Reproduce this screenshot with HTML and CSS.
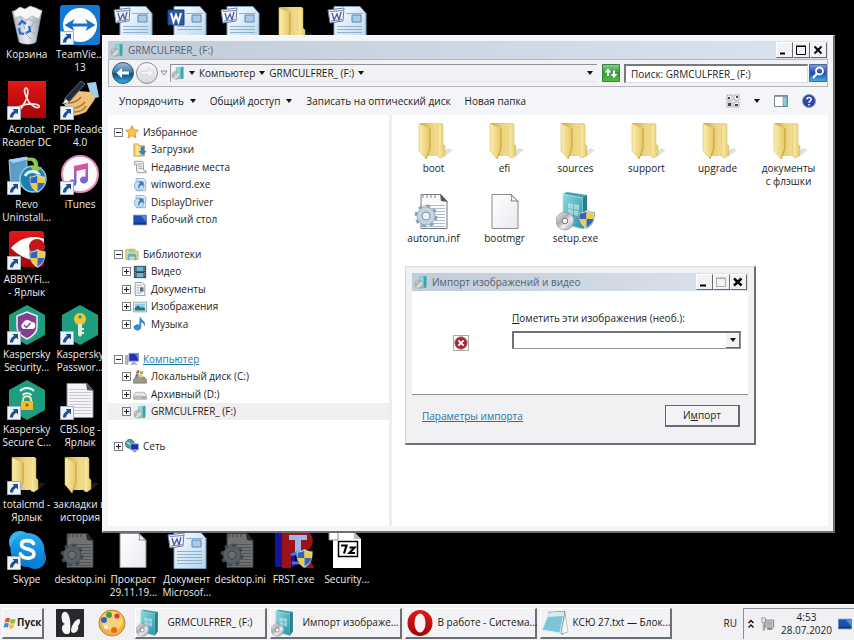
FILE: index.html
```html
<!DOCTYPE html>
<html lang="ru">
<head>
<meta charset="utf-8">
<title>GRMCULFRER_ (F:)</title>
<link rel="stylesheet" href="styles.css">
</head>
<body>
<svg class="sprite" aria-hidden="true">
  <defs>
    <linearGradient id="gFold" x1="0" x2="1"><stop offset="0" stop-color="#fbeeb0"/><stop offset="1" stop-color="#e6c763"/></linearGradient>
    <linearGradient id="gFoldIn" x1="0" x2="1"><stop offset="0" stop-color="#cfa640"/><stop offset=".5" stop-color="#ecd27c"/><stop offset="1" stop-color="#f6e39a"/></linearGradient>
    <linearGradient id="gTeal" x1="0" x2="1" y1="0" y2="1"><stop offset="0" stop-color="#8fd9df"/><stop offset="1" stop-color="#2b92a2"/></linearGradient>
    <linearGradient id="gDisc" x1="0" x2="1" y1="0" y2="1"><stop offset="0" stop-color="#f6f6f6"/><stop offset=".4" stop-color="#a9adb0"/><stop offset=".6" stop-color="#eceeef"/><stop offset="1" stop-color="#8d9296"/></linearGradient>
    <linearGradient id="gPage" x1="0" x2="1" y1="0" y2="1"><stop offset="0" stop-color="#ffffff"/><stop offset="1" stop-color="#e9eaf0"/></linearGradient>
    <linearGradient id="gWord" x1="0" x2="1" y1="0" y2="1"><stop offset="0" stop-color="#ffffff"/><stop offset="1" stop-color="#b4d3ee"/></linearGradient>
    <linearGradient id="gRed" x1="0" x2="0" y1="0" y2="1"><stop offset="0" stop-color="#e21818"/><stop offset="1" stop-color="#a50408"/></linearGradient>
    <linearGradient id="gNote" x1="0" x2="0" y1="0" y2="1"><stop offset="0" stop-color="#f0508f"/><stop offset="1" stop-color="#4f6cf0"/></linearGradient>
    <linearGradient id="gSky" x1="0" x2="0" y1="0" y2="1"><stop offset="0" stop-color="#2aa9ee"/><stop offset="1" stop-color="#0078d0"/></linearGradient>
    <linearGradient id="gBack" x1="0" x2="0" y1="0" y2="1"><stop offset="0" stop-color="#9fc0da"/><stop offset=".48" stop-color="#3a78a8"/><stop offset=".52" stop-color="#0c4a80"/><stop offset="1" stop-color="#35b5e8"/></linearGradient>
    <linearGradient id="gFwd" x1="0" x2="0" y1="0" y2="1"><stop offset="0" stop-color="#fafafa"/><stop offset="1" stop-color="#d5d7db"/></linearGradient>
    <linearGradient id="gGreen" x1="0" x2="0" y1="0" y2="1"><stop offset="0" stop-color="#8fce8f"/><stop offset=".5" stop-color="#2f9a33"/><stop offset="1" stop-color="#55c040"/></linearGradient>
    <linearGradient id="gBlue" x1="0" x2="0" y1="0" y2="1"><stop offset="0" stop-color="#7fa2dc"/><stop offset=".5" stop-color="#1f49b0"/><stop offset="1" stop-color="#3fb8ea"/></linearGradient>
    <linearGradient id="gBin" x1="0" x2="1"><stop offset="0" stop-color="#a9b3bb"/><stop offset=".5" stop-color="#e8edf1"/><stop offset="1" stop-color="#8f9ba5"/></linearGradient>
  </defs>

  <symbol id="arrow" viewBox="0 0 14 14"><path d="M.5.5h13v13H.5z" fill="#eef3f8" stroke="#9fb3c6"/><path d="M5.500 3H11v5.500L9.200 6.800C7.300 8 6.300 9.300 6 11.500H2.800C3 8.500 4.500 6.400 7.200 4.800z" fill="#1d4f92"/></symbol>
  <symbol id="shield" viewBox="0 0 16 18"><path d="M8 0c2.500 1.800 5 2.300 7.500 2.300C15.800 9 14 14.500 8 17.700 2 14.500.2 9 .5 2.300 3 2.300 5.500 1.800 8 0z" fill="#dfe6ec" stroke="#6a7d8c" stroke-width=".6"/><path d="M8 1.500v7H1.500C1.200 6.800 1.300 5 1.400 3.200 3.900 3.200 6 2.800 8 1.500z" fill="#2d66c0"/><path d="M8 1.500c2 1.300 4.100 1.700 6.600 1.700.1 1.800.2 3.600-.1 5.300H8z" fill="#f0cb3e"/><path d="M1.500 8.500H8v8.100c-3.600-2-5.800-4.800-6.500-8.100z" fill="#f0cb3e"/><path d="M8 8.500h6.500c-.7 3.300-2.900 6.100-6.500 8.100z" fill="#2d66c0"/></symbol>
  <g id="ov"><use href="#arrow" x="0" y="26" width="14" height="14"/></g>
  <g id="sh"><use href="#shield" x="22" y="19" width="17" height="19"/></g>
  <symbol id="folder" viewBox="0 0 40 40"><path d="M24 36l10-9 5 2-9 7z" fill="#777" opacity=".22"/><path d="M6 2l22 0v33H12z" fill="url(#gFoldIn)"/><path d="M24 3l5 0v20l2 2v9l-4 3-3-1z" fill="url(#gFold)" stroke="#d6b95c" stroke-width=".5"/><path d="M5 2.500L16 7.500V27l-4 11-7-8.500z" fill="url(#gFold)" stroke="#d9bd62" stroke-width=".6"/><path d="M16 7.500V27l-4 11" fill="none" stroke="#b9943a" stroke-width=".7"/></symbol>
  <symbol id="page" viewBox="0 0 40 40"><path d="M7 3.500h19l7 7v27H7z" fill="url(#gPage)" stroke="#8b8b92"/><path d="M26 3.500c1 2 1 4 0 6.500 2-.5 5 0 7 .5z" fill="#fff" stroke="#7f7f86"/></symbol>
  <symbol id="lined" viewBox="0 0 40 40"><path d="M7 3.500h20l6 7v27H7z" fill="#f5f5f7" stroke="#8b8b92"/><path d="M9 9.500h16M9 12.500h22M9 15.500h22M9 18.500h22M9 21.500h22M9 24.500h22M9 27.500h22M9 30.500h22M9 33.500h22" stroke="#c7c9d0"/><path d="M26 3l8 8-7-1z" fill="#555"/></symbol>
  <symbol id="cog" viewBox="0 0 24 24"><circle cx="12" cy="12" r="9.500" fill="none" stroke="#8ba2b5" stroke-width="4" stroke-dasharray="3.700 3.760"/><circle cx="12" cy="12" r="6.500" fill="none" stroke="#c3d3e0" stroke-width="5"/><circle cx="12" cy="12" r="9" fill="none" stroke="#8ea3b4" stroke-width=".8"/><circle cx="12" cy="12" r="4" fill="#eef2f5" stroke="#7d93a6"/></symbol>
  <symbol id="ini" viewBox="0 0 40 40"><path d="M7 3.500h20l6 7v27H7z" fill="#fafafc" stroke="#77777e"/><path d="M9 14.500h22M9 17.500h22M9 20.500h22M9 23.500h22M9 26.500h22M9 29.500h22M9 32.500h22M9 35.500h22" stroke="#aebdd0"/><path d="M9 3v4M13 3v4M17 3v4M21 3v4" stroke="#88888e"/><path d="M26 3l8 8-7-1z" fill="#555"/><use href="#cog" x="0" y="13" width="24" height="24"/></symbol>
  <symbol id="wordnew" viewBox="0 0 40 40"><path d="M7 1.500h26l6 7v30H7z" fill="url(#gWord)" stroke="#7d9dbd"/><path d="M25 10h9v7h-9z" fill="#a9cbe8" stroke="#5d88b4"/><path d="M19 8.500h17M10 21.500h25M10 24.500h25M10 27.500h25M10 30.500h25M10 33.500h25" stroke="#8db0d0"/><path d="M1 5l16-2-1 13-13 2z" fill="#f4f5fb" stroke="#6c79a8"/><path d="M5 8l2 7 3-6 2 6 2-8" fill="none" stroke="#4c5c98" stroke-width="1.300"/><path d="M3 6.500l13-1M4 16l11-1.500" stroke="#7582b0"/></symbol>
  <symbol id="wordblue" viewBox="0 0 40 40"><path d="M7 1.500h26l6 7v30H7z" fill="url(#gWord)" stroke="#7d9dbd"/><path d="M25 10h9v7h-9z" fill="#a9cbe8" stroke="#5d88b4"/><path d="M19 8.500h17M10 21.500h25M10 24.500h25" stroke="#8db0d0"/><path d="M1 5h16v15H1z" fill="#2b5aad" stroke="#173c80"/><path d="M4 8l2.500 9L9 10l2.500 7L14 8" fill="none" stroke="#fff" stroke-width="2"/></symbol>
  <symbol id="setup" viewBox="0 0 40 40"><path d="M7 3L11 1l20 3v28l-4 6L7 33z" fill="#3fa5b2"/><path d="M7 3l20 4v31L7 33z" fill="url(#gTeal)" stroke="#a7e2e6" stroke-width=".8"/><path d="M27 7l4-3v28l-4 6z" fill="#257f8e"/><path d="M12 12l5 1v5l-5-1zM18 13l5 1v5l-5-1zM12 18l5 1v5l-5-1zM18 19l5 1v5l-5-1z" fill="#c9f1f3" opacity=".6"/><circle cx="9" cy="30" r="9" fill="url(#gDisc)" stroke="#84898d" stroke-width=".6"/><circle cx="9" cy="30" r="2.800" fill="#fff" stroke="#777"/></symbol>
  <symbol id="drive" viewBox="0 0 16 16"><path d="M6 2l8-1v13l-8 1z" fill="#8ed8dc" stroke="#5fb9c0" stroke-width=".6"/><path d="M11 2l3-1v13l-3 1z" fill="#3aa3a9"/><circle cx="5.500" cy="10.500" r="4.500" fill="url(#gDisc)" stroke="#8f9599" stroke-width=".6"/><circle cx="5.500" cy="10.500" r="1.300" fill="#fff" stroke="#888" stroke-width=".5"/></symbol>
  <symbol id="bin" viewBox="0 0 40 40"><path d="M5 6l30-1-6 32c-3 3-13 3-17 0z" fill="url(#gBin)" stroke="#8e9aa4" stroke-width=".6"/><path d="M6 7l7-5 5 2 5-3 6 2 6 3-3 8-7-3-6 4-5-4-6 2z" fill="#f4f6f8" stroke="#a7b0b8" stroke-width=".7"/><path d="M13 12l4 5 5-3 7 4M10 20l5-4 3 8M26 18l-3 8 5 3M12 30l6-2 6 6" fill="none" stroke="#a3aeb8"/><path d="M12 20l3-4 4 3M12 23l1 5 4 1M19 28l4-2-1-5" fill="none" stroke="#2f65cc" stroke-width="2.200"/></symbol>
  <symbol id="tv" viewBox="0 0 40 40"><rect width="40" height="40" rx="3" fill="#1179d6"/><circle cx="20" cy="20" r="17" fill="#fff"/><path d="M4.500 20l10-6-2 4.500h15l-2-4.500 10 6-10 6 2-4.500h-15l2 4.500z" fill="#1474cc"/></symbol>
  <symbol id="acro" viewBox="0 0 40 40"><path d="M1 1h38v37H1z" fill="url(#gRed)"/><path d="M19 8c-3 0-1 8 3 14 3 4 8 7 10 5 2-3-9-4-15-2-5 1-9 4-8 6 2 2 6-3 9-9 3-5 4-14 1-14z" fill="none" stroke="#fbe7e7" stroke-width="1.700"/></symbol>
  <symbol id="pdf" viewBox="0 0 40 40"><path d="M27 3l9-1 3 15-7 2z" fill="#9ccdea"/><path d="M4 23l14-12 13 1 4 7-9 13c-7 3-14 6-19 1z" fill="#edc179"/><path d="M8 23c5 0 10-2 13-6M10 28c6 1 12-2 15-6M14 32c6 0 10-2 12-6" fill="none" stroke="#a9752f" stroke-width="1.500"/><path d="M5 18L21 1l4 3L10 21l-6 3z" fill="#222c38" stroke="#5d6873"/><path d="M2 24l4-5 3 3z" fill="#eee"/></symbol>
  <symbol id="revo" viewBox="0 0 40 40"><path d="M2 5L20 2v28L4 34z" fill="#5b9ec9" stroke="#9ac9e3"/><path d="M2 5l18-3 3 2L6 8z" fill="#a7d3ea"/><circle cx="26" cy="24" r="13" fill="#1e7fae" stroke="#8ed1e8" stroke-width="1.500"/><path d="M21 3c8-2 11 4 10 9h4l-7 7-5-8h4c0-4-2-6-6-5z" fill="#8ccb45"/><path d="M18 21c3-6 12-6 15 0" fill="none" stroke="#d7f3fa" stroke-width="3"/></symbol>
  <symbol id="itunes" viewBox="0 0 40 40"><circle cx="20" cy="19" r="18" fill="#fcfafd" stroke="#e28fc0" stroke-width="2"/><path d="M14 11l14-3v17a4 3.500 0 1 1-2.500-3.300V14l-9 2v12a4 3.500 0 1 1-2.500-3.300z" fill="url(#gNote)"/></symbol>
  <symbol id="abbyy" viewBox="0 0 40 40"><rect x="2" y="1" width="35" height="36" rx="3" fill="url(#gRed)"/><path d="M4 18C14 7 26 5 37 9v20c-12 4-24-2-33-11z" fill="#fff"/><circle cx="30" cy="17" r="8" fill="#c5161c"/></symbol>
  <symbol id="hex" viewBox="0 0 40 40"><path d="M20 0l18 10v20L20 40 2 30V10z" fill="#1f9e7f"/></symbol>
  <symbol id="ksec" viewBox="0 0 40 40"><use href="#hex"/><path d="M20 7l10 4v11c0 5-4 9-10 12-6-3-10-7-10-12V11z" fill="#84408f" stroke="#f3edf5" stroke-width="1.500"/><path d="M16 24a3.500 3.500 0 0 1 0-6 5 5 0 0 1 8.500-1 3.500 3.500 0 0 1 .5 7z" fill="#fff"/><path d="M17 20l2.500 2.500 4-4.500" fill="none" stroke="#84408f" stroke-width="1.500"/></symbol>
  <symbol id="kpass" viewBox="0 0 40 40"><use href="#hex"/><circle cx="20" cy="14" r="6" fill="#f3c62c"/><circle cx="20" cy="12" r="1.800" fill="#1f9e7f"/><path d="M18 19h4v11l-2 2-2-2z" fill="#e9e6d8"/><path d="M22 23h2v2h-2zM22 27h2v2h-2z" fill="#e9e6d8"/></symbol>
  <symbol id="kvpn" viewBox="0 0 40 40"><use href="#hex"/><path d="M13 11c4-4 10-4 14 0M15.500 15c3-2.500 6-2.500 9 0" fill="none" stroke="#e9fff8" stroke-width="1.800"/><path d="M16 22v-2c0-5 8-5 8 0v2" fill="none" stroke="#f4e4b5" stroke-width="2"/><path d="M14 21h12v9H14z" fill="#f5b92a"/><circle cx="20" cy="25" r="1.500" fill="#8c6110"/></symbol>
  <symbol id="skype" viewBox="0 0 40 40"><circle cx="13" cy="12" r="11" fill="#35b5f2"/><circle cx="28" cy="28" r="11" fill="#0a7fd6"/><circle cx="20.500" cy="20" r="17" fill="url(#gSky)"/><path d="M26.500 13.500c-2-4-12-4-12 1 0 6 12.500 3 12.500 9.500 0 5.500-11 5.500-13.500 0" fill="none" stroke="#fff" stroke-width="3.600" stroke-linecap="round"/></symbol>
  <symbol id="frst" viewBox="0 0 40 40"><path d="M1 1h20v36H1z" fill="#14149c"/><path d="M8 38V2h24c9 0 9 17 0 18l8 18H29l-6-16h-6v16z" fill="#9c1218"/><path d="M15 5h18v5h-6v15h-6V10h-6z" fill="#9ab7f0"/><path d="M17 25c5-3 10 0 12 6M18 33h9" fill="none" stroke="#4c6ff0" stroke-width="3"/></symbol>
  <symbol id="sevenz" viewBox="0 0 40 40"><path d="M6 2h21l7 7v29H6z" fill="#fff"/><path d="M27 2l7 7h-7z" fill="#bbb"/><path d="M2 1h9v9H2z" fill="#fff" stroke="#888"/><path d="M11.500 11.500h19v15h-19z" fill="#fff" stroke="#000" stroke-width="1.500"/><path d="M14 15.500h5.500L17 23.500M22.500 17.500h5l-5 5.500h5.500" fill="none" stroke="#000" stroke-width="2.200"/></symbol>

  <symbol id="flag" viewBox="0 0 16 16"><path d="M3 3c2-1.300 3.500-1.200 5-.3L7 7.500C5.500 6.700 4 6.700 2 7.700z" fill="#e5532a"/><path d="M9 3c2 1 3.500 1 5.500 0L13.300 8c-2 1-3.500 1-5.200 0z" fill="#8bbf3a"/><path d="M1.700 8.700c2-1.100 3.500-1 5-.2l-1 4.700c-1.600-.9-3-.9-5 .2z" fill="#3f86d8"/><path d="M7.800 9c1.700 1 3.300 1 5.200 0l-1.200 4.800c-2 1-3.500 1-5 0z" fill="#f6c12c"/></symbol>
  <symbol id="bfly" viewBox="0 0 28 28"><path d="M0 0h28v28H0z" fill="#26282b"/><path d="M14 23C15 14 14 5 10 3 6 2 5 7 6 11c0 2 1 3 3 4-3 1-4 4-2 8 2 3 6 3 7 0z" fill="#f4f4f4"/><path d="M15 21c1-6 5-11 8-11 2 1 1 5-1 7 1 3-1 6-4 7-2 0-3-1-3-3z" fill="#f4f4f4"/></symbol>
  <symbol id="palette" viewBox="0 0 28 28"><ellipse cx="14" cy="14" rx="13" ry="13" fill="#f0b04c" stroke="#c7822b"/><ellipse cx="14" cy="12" rx="11" ry="9.500" fill="#f9d080"/><circle cx="11" cy="6" r="3" fill="#3f9f3a"/><circle cx="6" cy="11" r="3" fill="#3264c6"/><circle cx="19" cy="7" r="2.600" fill="#df3c2a"/><circle cx="22" cy="14" r="2.600" fill="#f5e04a"/><circle cx="16" cy="21" r="3" fill="#e06c1d"/><circle cx="8" cy="18" r="2" fill="#fff"/></symbol>
  <symbol id="opera" viewBox="0 0 28 28"><ellipse cx="14" cy="14" rx="12.500" ry="13" fill="url(#gRed)"/><ellipse cx="14" cy="14" rx="5.500" ry="9.500" fill="#f6f4f6"/></symbol>
  <symbol id="notepad" viewBox="0 0 28 28"><path d="M7 3l17-1 2 20-5 4z" fill="#5f7f8a"/><path d="M8 4l15-1-4 21-18-3z" fill="#7cc4d6" stroke="#d9eff4"/><path d="M8 4l15-1-1 4-15 1z" fill="#d6ebf1"/><path d="M24 4l3 19-7 2z" fill="#f3f5f6" stroke="#a1a9ac" stroke-width=".6"/></symbol>

  <symbol id="star" viewBox="0 0 16 16"><path d="M8 .8l2.100 4.800 5.200.5-3.900 3.500 1.100 5.200L8 12.100l-4.500 2.700 1.100-5.200L.7 6.100l5.200-.5z" fill="#fbc646" stroke="#d98a28"/></symbol>
  <symbol id="dl" viewBox="0 0 16 16"><path d="M1 1h5l1 2h6v12H1z" fill="#f0d27a" stroke="#caa54a"/><path d="M5 3v11" stroke="#fff2bf" stroke-width="2"/><path d="M9 4h4v5h2.500L11 14.500 6.500 9H9z" fill="#2b86cb"/></symbol>
  <symbol id="recent" viewBox="0 0 16 16"><path d="M2 1.500h9l1 3v7l3 1v2H5l-1-3V5H1.500z" fill="#f1f1f3" stroke="#8f9298"/><path d="M5 4.500h5M6 7h4M6 9.500h5" stroke="#8f9298"/></symbol>
  <symbol id="lnk" viewBox="0 0 16 16"><path d="M3.500.5h9l2 2v12h-11z" fill="#dbe8f5" stroke="#93aec8"/><circle cx="7" cy="9" r="5.500" fill="#c9ddf0" stroke="#87a7c7"/><path d="M6 4h6v6l-2-2c-2 1-3 2-3 5-2-3-1-5 1-7z" fill="#3a7cc0"/></symbol>
  <symbol id="desk" viewBox="0 0 16 16"><path d="M.5 2.500h15v11H.5z" fill="#1c50b8" stroke="#6a86a8"/><path d="M9 3h6v7z" fill="#4f8ce0"/><path d="M1 11h14v2H1z" fill="#18386e"/></symbol>
  <symbol id="lib" viewBox="0 0 16 16"><path d="M1 3h5l1 2h8v9H1z" fill="#efd98c" stroke="#c4aa55"/><path d="M4 2h8v4H4z" fill="#9ccf8f"/><path d="M3 15V9c0-2 10-2 10 0v6h-2v-4H5v4z" fill="#58b1cf"/></symbol>
  <symbol id="film" viewBox="0 0 16 16"><path d="M1 1h14v14H1z" fill="#2d4450"/><path d="M4 2h8v5H4zM4 9h8v5H4z" fill="#6db4d0"/><path d="M2.500 2v12M13.500 2v12" stroke="#c8d6dc" stroke-dasharray="1 1"/></symbol>
  <symbol id="docs" viewBox="0 0 16 16"><path d="M2.500.5h8l3 3v12h-11z" fill="#f4f6f8" stroke="#8a929a"/><path d="M4 3.500h6M4 6.500h3M4 9.500h3M4 12.500h6" stroke="#98a6b4"/><path d="M8 6h4v5H8z" fill="#5d6f80"/></symbol>
  <symbol id="pics" viewBox="0 0 16 16"><path d="M.5 2.500h15v11H.5z" fill="#fff" stroke="#8c9aa4"/><path d="M2 4h12v8H2z" fill="#8cd0ea"/><path d="M2 9l4-3 3 3 2-1 3 2v2H2z" fill="#2b6f74"/></symbol>
  <symbol id="music" viewBox="0 0 16 16"><path d="M8 0c1 4 7 4 5 10 0-3-2-4-4-4v6a4 3.200 0 1 1-1.500-2.600z" fill="#2f8fd0" stroke="#1c6ba8" stroke-width=".5"/></symbol>
  <symbol id="pc" viewBox="0 0 16 16"><path d="M.5 4h3v10h-3z" fill="#b5bcc3" stroke="#78828c" stroke-width=".6"/><path d="M4.500 1.500h11v9h-11z" fill="#1f33b8" stroke="#98a4b0"/><path d="M11 2h4v6z" fill="#5a7ce8"/><path d="M8 11h4v2h2v1.500H6V13h2z" fill="#a9b0b8"/></symbol>
  <symbol id="hdd" viewBox="0 0 16 16"><path d="M3 6h10l2.500 4v4H.5v-4z" fill="#e4e6e8" stroke="#8b9095" stroke-width=".7"/><path d="M1 10h14v4H1z" fill="#b9bdc1"/><path d="M11 11.500h3v1h-3z" fill="#4a5"/></symbol>
  <symbol id="sysdd" viewBox="0 0 16 16"><path d="M3 8h10l2.500 3v4H.5v-4z" fill="#9b9a80" stroke="#6b6d66" stroke-width=".7"/><use href="#flag" x="2" y="-1" width="11" height="11"/></symbol>
  <symbol id="net" viewBox="0 0 16 16"><circle cx="5.500" cy="5.500" r="5" fill="#3fa5a5" stroke="#25706f"/><path d="M2 4c3 0 2 3 5 2" fill="none" stroke="#bfe6c0" stroke-width="1.500"/><path d="M6.500 5.500h9v7h-9z" fill="#1b30b4" stroke="#9db2d0"/><path d="M9 13h4v2H9z" fill="#8895a8"/></symbol>
  <symbol id="tray" viewBox="0 0 16 16"><path d="M4.500 3.500h10v8h-10z" fill="#d6d8da" stroke="#777"/><path d="M6 5h7v5H6z" fill="#a9adb1"/><path d="M1 1h4v5H4v9H2.500V6H1z" fill="#eee" stroke="#777" stroke-width=".8"/><path d="M7 13.500h6" stroke="#777" stroke-width="2"/></symbol>
</svg>

<main class="desktop">
  <div class="icons">
    <ul class="column">
      <li class="shortcut"><svg class="big"><use href="#bin"/></svg>Корзина</li>
      <li class="shortcut"><svg class="big"><use href="#acro"/><use href="#ov"/></svg>Acrobat<br>Reader DC</li>
      <li class="shortcut"><svg class="big"><use href="#revo"/><use href="#sh"/><use href="#ov"/></svg>Revo<br>Uninstall...</li>
      <li class="shortcut"><svg class="big"><use href="#abbyy"/><use href="#sh"/><use href="#ov"/></svg>ABBYYFi...<br>- Ярлык</li>
      <li class="shortcut"><svg class="big"><use href="#ksec"/><use href="#ov"/></svg>Kaspersky<br>Security...</li>
      <li class="shortcut"><svg class="big"><use href="#kvpn"/><use href="#ov"/></svg>Kaspersky<br>Secure C...</li>
      <li class="shortcut"><svg class="big"><use href="#folder"/><use href="#ov"/></svg>totalcmd -<br>Ярлык</li>
      <li class="shortcut"><svg class="big"><use href="#skype"/><use href="#ov"/></svg>Skype</li>
    </ul>
    <ul class="column">
      <li class="shortcut"><svg class="big"><use href="#tv"/><use href="#ov"/></svg>TeamVie...<br>13</li>
      <li class="shortcut"><svg class="big"><use href="#pdf"/><use href="#ov"/></svg>PDF Reader<br>4.0</li>
      <li class="shortcut"><svg class="big"><use href="#itunes"/><use href="#ov"/></svg>iTunes</li>
      <li class="shortcut"></li>
      <li class="shortcut"><svg class="big"><use href="#kpass"/><use href="#ov"/></svg>Kaspersky<br>Passwor...</li>
      <li class="shortcut"><svg class="big"><use href="#lined"/><use href="#ov"/></svg>CBS.log -<br>Ярлык</li>
      <li class="shortcut"><svg class="big"><use href="#folder"/></svg>закладки и<br>история</li>
      <li class="shortcut"><svg class="big hidden-file"><use href="#ini"/></svg>desktop.ini</li>
    </ul>
    <ul class="column ends">
      <li class="shortcut"><svg class="big"><use href="#wordnew"/></svg></li>
      <li class="shortcut"><svg class="big"><use href="#page"/></svg>Прокраст<br>29.11.19...</li>
    </ul>
    <ul class="column ends">
      <li class="shortcut"><svg class="big"><use href="#wordblue"/></svg></li>
      <li class="shortcut"><svg class="big"><use href="#wordnew"/></svg>Документ<br>Microsof...</li>
    </ul>
    <ul class="column ends">
      <li class="shortcut"><svg class="big"><use href="#wordnew"/></svg></li>
      <li class="shortcut"><svg class="big hidden-file"><use href="#ini"/></svg>desktop.ini</li>
    </ul>
    <ul class="column ends">
      <li class="shortcut"><svg class="big"><use href="#folder"/></svg></li>
      <li class="shortcut"><svg class="big"><use href="#frst"/><use href="#sh"/></svg>FRST.exe</li>
    </ul>
    <ul class="column ends">
      <li class="shortcut"><svg class="big"><use href="#wordnew"/></svg></li>
      <li class="shortcut"><svg class="big"><use href="#sevenz"/></svg>Security...</li>
    </ul>
  </div>

  <section class="window explorer" aria-label="GRMCULFRER_ (F:)">
    <header class="titlebar">
      <svg class="small"><use href="#drive"/></svg>
      <h1 class="caption">GRMCULFRER_ (F:)</h1>
      <button class="winbtn" aria-label="Свернуть"><svg viewBox="0 0 12 12"><path d="M2 9.500h5" stroke="#000" stroke-width="2"/></svg></button>
      <button class="winbtn" aria-label="Развернуть"><svg viewBox="0 0 12 12"><path d="M1.500 2.500h9v8h-9zM1 2h10" fill="none" stroke="#000"/></svg></button>
      <button class="winbtn" aria-label="Закрыть"><svg viewBox="0 0 12 12"><path d="M2.500 2.500l7 7M9.500 2.500l-7 7" stroke="#000" stroke-width="2"/></svg></button>
    </header>
    <div class="addressrow">
      <button class="round" aria-label="Назад"><svg viewBox="0 0 22 22"><circle cx="11" cy="11" r="10.500" fill="url(#gBack)" stroke="#35536e"/><path d="M4.500 11L10 6v3.500h7v3h-7V16z" fill="#fff"/></svg></button>
      <button class="round" aria-label="Вперёд"><svg viewBox="0 0 22 22"><circle cx="11" cy="11" r="10.500" fill="url(#gFwd)" stroke="#8c8f94"/><path d="M17.500 11L12 6v3.500H5v3h7V16z" fill="#f6f6f8" stroke="#c9ccd0" stroke-width=".6"/></svg></button>
      <button class="plain" aria-label="Последние страницы"><svg class="tick" viewBox="0 0 8 6"><path d="M1 1h6L4 5z" fill="#fff" stroke="#888"/></svg></button>
      <nav class="address">
        <svg class="small"><use href="#drive"/></svg>
        <i class="tri"></i><a class="crumb" href="#">Компьютер</a><i class="tri"></i><a class="crumb" href="#">GRMCULFRER_ (F:)</a><i class="tri"></i>
        <button class="plain last" aria-label="Предыдущие расположения"><i class="tri"></i></button>
      </nav>
      <button class="plain" aria-label="Обновить"><svg class="glyph" viewBox="0 0 18 18"><path d="M.5.5h17v17H.5z" fill="url(#gGreen)" stroke="#3e7f45"/><path d="M2.500 8.500L6 4.500 9.500 8.500H7V12H5V8.500zM15.500 10L12 14l-3.500-4H11V6.500h2V10z" fill="#fff"/></svg></button>
      <div class="search">
        <input class="searchbox" type="text" aria-label="Поиск" value="Поиск: GRMCULFRER_ (F:)">
        <button class="plain" aria-label="Найти"><svg class="glyph" viewBox="0 0 18 18"><path d="M.5.5h17v17H.5z" fill="url(#gBlue)" stroke="#48689a"/><circle cx="10.500" cy="7" r="3.500" fill="none" stroke="#fff" stroke-width="1.800"/><path d="M8 9.500L4 14" stroke="#fff" stroke-width="2.200"/></svg></button>
      </div>
    </div>
    <div class="toolbar">
      <button class="tool">Упорядочить<i class="tri"></i></button>
      <button class="tool">Общий доступ<i class="tri"></i></button>
      <button class="tool">Записать на оптический диск</button>
      <button class="tool">Новая папка</button>
      <span class="spacer"></span>
      <button class="plain" aria-label="Вид"><svg class="small" viewBox="0 0 14 14"><path d="M1 1h5v5H1zM8 1h5v5H8zM1 8h5v5H1zM8 8h5v5H8z" fill="#fff" stroke="#999" stroke-width=".8"/><path d="M2 3h2v2H2zM10 2h2v2h-2zM2 9h3v3H2zM9 10h3v2H9z" fill="#444"/></svg></button>
      <button class="plain" aria-label="Другие виды"><i class="tri"></i></button>
      <button class="plain" aria-label="Область просмотра"><svg class="small" viewBox="0 0 14 14"><path d="M.5 1.500h13v11H.5z" fill="#fff" stroke="#7d8790"/><path d="M1 2h12v1H1z" fill="#8fa3b3"/><path d="M9 3h4v9H9z" fill="#8ccbdc" stroke="#5f8fa0" stroke-width=".6"/></svg></button>
      <button class="plain" aria-label="Справка"><svg class="small" viewBox="0 0 14 14"><circle cx="7" cy="7" r="6.500" fill="#2d47a8" stroke="#8d97c0"/><path d="M4.800 5.400C5 2.600 9.400 2.900 9.200 5.400 9.100 6.900 7 6.900 7 8.800M7 10v1.600" fill="none" stroke="#fff" stroke-width="1.500"/></svg></button>
    </div>
    <div class="panes">
      <nav class="tree">
        <ul class="group">
          <li class="node"><i class="box minus"></i><svg class="small"><use href="#star"/></svg>Избранное</li>
          <li class="node leaf"><svg class="small"><use href="#dl"/></svg>Загрузки</li>
          <li class="node leaf"><svg class="small"><use href="#recent"/></svg>Недавние места</li>
          <li class="node leaf"><svg class="small"><use href="#lnk"/></svg>winword.exe</li>
          <li class="node leaf"><svg class="small"><use href="#lnk"/></svg>DisplayDriver</li>
          <li class="node leaf"><svg class="small"><use href="#desk"/></svg>Рабочий стол</li>
        </ul>
        <ul class="group">
          <li class="node"><i class="box minus"></i><svg class="small"><use href="#lib"/></svg>Библиотеки</li>
          <li class="node child"><i class="box plus"></i><svg class="small"><use href="#film"/></svg>Видео</li>
          <li class="node child"><i class="box plus"></i><svg class="small"><use href="#docs"/></svg>Документы</li>
          <li class="node child"><i class="box plus"></i><svg class="small"><use href="#pics"/></svg>Изображения</li>
          <li class="node child"><i class="box plus"></i><svg class="small"><use href="#music"/></svg>Музыка</li>
        </ul>
        <ul class="group">
          <li class="node"><i class="box minus"></i><svg class="small"><use href="#pc"/></svg><a class="link" href="#">Компьютер</a></li>
          <li class="node child"><i class="box plus"></i><svg class="small"><use href="#sysdd"/></svg>Локальный диск (C:)</li>
          <li class="node child"><i class="box plus"></i><svg class="small"><use href="#hdd"/></svg>Архивный (D:)</li>
          <li class="node child selected"><i class="box plus"></i><svg class="small"><use href="#drive"/></svg>GRMCULFRER_ (F:)</li>
        </ul>
        <ul class="group">
          <li class="node"><i class="box plus"></i><svg class="small"><use href="#net"/></svg>Сеть</li>
        </ul>
      </nav>
      <ul class="files">
        <li class="file"><svg class="big"><use href="#folder"/></svg>boot</li>
        <li class="file"><svg class="big"><use href="#folder"/></svg>efi</li>
        <li class="file"><svg class="big"><use href="#folder"/></svg>sources</li>
        <li class="file"><svg class="big"><use href="#folder"/></svg>support</li>
        <li class="file"><svg class="big"><use href="#folder"/></svg>upgrade</li>
        <li class="file"><svg class="big"><use href="#folder"/></svg>документы<br>с флэшки</li>
        <li class="file"><svg class="big"><use href="#ini"/></svg>autorun.inf</li>
        <li class="file"><svg class="big"><use href="#page"/></svg>bootmgr</li>
        <li class="file"><svg class="big"><use href="#setup"/><use href="#sh"/></svg>setup.exe</li>
      </ul>
    </div>
  </section>

  <section class="window dialog" role="dialog" aria-label="Импорт изображений и видео">
    <header class="titlebar">
      <svg class="small"><use href="#drive"/></svg>
      <h2 class="caption">Импорт изображений и видео</h2>
      <button class="winbtn" aria-label="Свернуть"><svg viewBox="0 0 12 12"><path d="M2 9.500h6" stroke="#000" stroke-width="2"/></svg></button>
      <button class="winbtn" aria-label="Развернуть" disabled><svg viewBox="0 0 12 12"><path d="M1.500 2.500h9v8h-9zM1 2h10" fill="none" stroke="#aaa"/></svg></button>
      <button class="winbtn" aria-label="Закрыть"><svg viewBox="0 0 12 12"><path d="M2 2.500l7.500 7M9.500 2.500l-7.500 7" stroke="#000" stroke-width="2.400"/></svg></button>
    </header>
    <div class="dialogbody">
      <div class="preview"><svg class="error" viewBox="0 0 18 18"><path d="M.5.5h17v17H.5z" fill="#fff" stroke="#999"/><circle cx="9" cy="9" r="7" fill="#b02032" stroke="#888"/><path d="M6 6l6 6M12 6l-6 6" stroke="#fff" stroke-width="2.200"/></svg></div>
      <div class="field">
        <label for="tag"><u>П</u>ометить эти изображения (необ.):</label>
        <div class="combo"><select id="tag"><option></option></select><i class="drop"><i class="tri"></i></i></div>
      </div>
    </div>
    <footer class="dialogfoot">
      <a class="link" href="#">Параметры импорта</a>
      <button class="primary">И<u>м</u>порт</button>
    </footer>
  </section>
</main>

<footer class="taskbar">
  <button class="start"><svg class="small"><use href="#flag"/></svg>Пуск</button>
  <div class="quick">
    <button class="plain" aria-label="Бабочка"><svg class="medium"><use href="#bfly"/></svg></button>
    <button class="plain" aria-label="Палитра"><svg class="medium"><use href="#palette"/></svg></button>
  </div>
  <div class="tasks">
    <button class="task"><svg class="medium"><use href="#setup"/></svg>GRMCULFRER_ (F:)</button>
    <button class="task"><svg class="medium"><use href="#setup"/></svg>Импорт изображе...</button>
    <button class="task"><svg class="medium"><use href="#opera"/></svg>В работе - Система...</button>
    <button class="task"><svg class="medium"><use href="#notepad"/></svg>КСЮ 27.txt — Блок...</button>
  </div>
  <span class="lang">RU</span>
  <div class="tray">
    <button class="plain" aria-label="Скрытые значки"><svg class="chev" viewBox="0 0 8 10"><path d="M1.500 4L4 1.500 6.500 4M1.500 8.500L4 6l2.500 2.500" fill="none" stroke="#111" stroke-width="1.400"/></svg></button>
    <svg class="small"><use href="#tray"/></svg>
    <time class="clock">4:53<br>28.07.2020</time>
    <svg class="small"><use href="#desk"/></svg>
  </div>
</footer>
</body>
</html>
```
FILE: styles.css
```css
* {
  box-sizing: border-box;
}

body {
  margin: 0;
  height: 100vh;
  display: flex;
  flex-direction: column;
  overflow: hidden;
  background: #000;
  color: #1c1c20;
  font-family: "Open Sans", "Noto Sans", sans-serif;
  font-size: 10px;
  line-height: 13px;
}

ul {
  list-style: none;
  margin: 0;
  padding: 0;
}

button,
input,
select {
  font: inherit;
  color: inherit;
  margin: 0;
  padding: 0;
}

svg {
  display: block;
  flex: none;
}

.sprite {
  position: absolute;
  width: 0;
  height: 0;
}

.small {
  width: 14px;
  height: 14px;
}

.medium {
  width: 28px;
  height: 28px;
}

.big {
  width: 40px;
  height: 40px;
}

.plain {
  display: flex;
  align-items: center;
  border: 0;
  background: none;
}

.tri {
  width: 0;
  height: 0;
  border: 3px solid transparent;
  border-top: 4px solid #111;
  border-bottom: 0;
}

.link {
  color: #2474a6;
}

/* Desktop */

.desktop {
  position: relative;
  flex: 1;
  min-height: 0;
}

.icons {
  display: grid;
  grid-template-columns: repeat(16, 1fr);
  height: 100%;
  padding-top: 5px;
  color: #eee;
}

.column {
  display: flex;
  flex-direction: column;
  min-width: 0;
}

.ends {
  justify-content: space-between;
}

.shortcut {
  display: flex;
  flex-direction: column;
  align-items: center;
  height: 75px;
  white-space: nowrap;
  text-align: center;
}

.shortcut .big {
  margin-bottom: 3px;
}

.hidden-file {
  opacity: 0.45;
}

/* Windows */

.window {
  position: absolute;
  display: flex;
  flex-direction: column;
  background: #f1f1f4;
  border: 1px solid #f8f9fb;
  border-right: 2px solid #6c6f73;
  border-bottom: 2px solid #6c6f73;
}

.explorer {
  top: 35px;
  right: 19px;
  bottom: 71px;
  left: 102px;
  padding: 5px;
  background: #f3f5f8;
}

.dialog {
  top: 266px;
  left: 405px;
  width: 351px;
  padding: 6px;
  border-top-color: #d6d9dd;
  border-left-color: #d6d9dd;
}

.titlebar {
  display: flex;
  align-items: center;
  height: 18px;
  padding: 0 1px 0 2px;
  background: linear-gradient(90deg, #c1ccd8, #d9e4ef);
}

.caption {
  flex: 1;
  margin: 0 0 0 4px;
  font-size: 10px;
  font-weight: 400;
  color: #53616f;
}

.winbtn {
  width: 17px;
  height: 16px;
  padding: 1px;
  background: #f3f3f5;
  border: 1px solid #fff;
  border-right-color: #66696d;
  border-bottom-color: #66696d;
}

.winbtn svg {
  width: 12px;
  height: 12px;
}

.addressrow {
  display: flex;
  align-items: center;
  height: 28px;
  padding: 0 0 0 3px;
  background: #f2f2f5;
  border: 1px solid #b4b6ba;
}

.round {
  width: 22px;
  height: 22px;
  margin-right: 2px;
  border: 0;
  background: none;
}

.tick {
  width: 8px;
  height: 6px;
}

.address {
  flex: 1;
  display: flex;
  align-items: center;
  gap: 4px;
  height: 18px;
  margin: 0 5px 0 2px;
  border: 1px solid #8f9196;
  border-right: 0;
  border-bottom-color: #e3e4e8;
}

.crumb {
  color: inherit;
  text-decoration: none;
}

.last {
  margin: 0 4px 0 auto;
}

.glyph {
  width: 18px;
  height: 18px;
}

.search {
  display: flex;
  align-items: center;
  width: 203px;
  margin-left: 4px;
}

.searchbox {
  flex: 1;
  min-width: 0;
  height: 19px;
  padding: 0 5px;
  margin-right: 1px;
  background: #fff;
  border: 1px solid #dcdde0;
  border-top: 2px solid #77797d;
  border-left: 2px solid #77797d;
}

.toolbar {
  display: flex;
  align-items: center;
  gap: 14px;
  height: 28px;
  padding: 0 12px 0 11px;
}

.tool {
  display: flex;
  align-items: center;
  gap: 6px;
  border: 0;
  background: none;
}

.spacer {
  flex: 1;
}

.panes {
  flex: 1;
  display: flex;
  min-height: 0;
  background: #fff;
}

.tree {
  width: 284px;
  padding-top: 8px;
  border-right: 3px solid #ededf1;
}

.group {
  margin-bottom: 17px;
}

.node {
  display: flex;
  align-items: center;
  gap: 4px;
  height: 17px;
  padding-left: 6px;
}

.node:nth-child(odd) {
  height: 18px;
}

.node.child {
  padding-left: 14px;
}

.node.leaf {
  padding-left: 25px;
}

.selected {
  background: #f0f0f2;
}

.box {
  width: 9px;
  height: 9px;
  margin-right: -2px;
  border: 1px solid #7c7f83;
  background: linear-gradient(#222, #222) center / 5px 1px no-repeat;
}

.box.plus {
  background:
    linear-gradient(#222, #222) center / 5px 1px no-repeat,
    linear-gradient(#222, #222) center / 1px 5px no-repeat;
}

.files {
  flex: 1;
  display: grid;
  grid-template-columns: repeat(auto-fill, 71px);
  grid-auto-rows: 70px;
  align-content: start;
  padding: 6px 0 0 6px;
}

.file {
  display: flex;
  flex-direction: column;
  align-items: center;
  text-align: center;
}

.file .big {
  margin-bottom: 1px;
}

/* Import dialog */

.dialogbody {
  display: flex;
  height: 104px;
  background: #fff;
  border-bottom: 1px solid #8f9296;
}

.preview {
  width: 100px;
  padding: 44px 0 0 41px;
}

.error {
  width: 16px;
  height: 16px;
}

.field {
  flex: 1;
  padding: 21px 7px 0 0;
}

.combo {
  display: flex;
  height: 18px;
  margin-top: 6px;
  background: #fff;
  border: 1px solid #8f9296;
  border-top: 2px solid #6f7276;
  border-left: 2px solid #6f7276;
}

.combo select {
  flex: 1;
  border: 0;
  background: #fff;
  appearance: none;
}

.drop {
  display: grid;
  place-items: center;
  width: 14px;
  background: #f3f3f5;
  border-right: 1px solid #66696d;
  border-bottom: 1px solid #66696d;
}

.dialogfoot {
  display: flex;
  align-items: center;
  justify-content: space-between;
  height: 42px;
  padding: 0 8px 0 10px;
}

.primary {
  width: 75px;
  height: 22px;
  background: #f3f3f5;
  border: 1px solid #66696d;
  border-right-width: 2px;
  border-bottom-width: 2px;
}

/* Taskbar */

.taskbar {
  display: flex;
  align-items: center;
  height: 36px;
  padding: 1px 0 0 2px;
  background: #f1f0f3;
  border-top: 1px solid #fff;
}

.start,
.task {
  display: flex;
  align-items: center;
  height: 31px;
  background: #f3f2f5;
  border: 1px solid #fff;
  border-right: 2px solid #6c6f73;
  border-bottom: 2px solid #6c6f73;
}

.start {
  padding-right: 1px;
  font-weight: 700;
}

.quick {
  display: flex;
  gap: 14px;
  padding: 0 9px 0 12px;
}

.tasks {
  flex: 1;
  display: grid;
  grid-template-columns: repeat(4, 132px);
  gap: 3px;
}

.task {
  gap: 3px;
  white-space: nowrap;
}

.lang {
  padding-right: 6px;
}

.tray {
  display: flex;
  align-items: center;
  gap: 6px;
  height: 31px;
  padding: 0 2px 0 3px;
  border-top: 1px solid #8b8e92;
  border-left: 1px solid #8b8e92;
}

.chev {
  width: 8px;
  height: 10px;
}

.clock {
  text-align: center;
}
```
